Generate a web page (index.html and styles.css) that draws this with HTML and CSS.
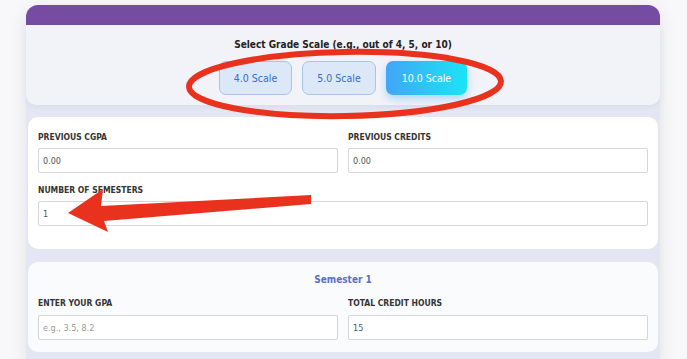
FILE: index.html
```html
<!DOCTYPE html>
<html lang="en">

<head>
    <meta charset="UTF-8">
    <meta name="viewport" content="width=device-width, initial-scale=1.0">
    <title>CGPA Calculator</title>
    <link rel="stylesheet" href="styles.css">
</head>

<body>
    <div class="container">
        <div class="top-bar"></div>
        <div class="scale-box">
            <p class="scale-title">Select Grade Scale (e.g., out of 4, 5, or 10)</p>
            <div class="scale-buttons">
                <button class="scale-btn">4.0 Scale</button>
                <button class="scale-btn">5.0 Scale</button>
                <button class="scale-btn active">10.0 Scale</button>
            </div>
        </div>

        <div class="card">
            <div class="row">
                <div class="field">
                    <label>Previous CGPA</label>
                    <input type="text" value="0.00">
                </div>
                <div class="field">
                    <label>Previous Credits</label>
                    <input type="text" value="0.00">
                </div>
            </div>
            <div class="field spaced">
                <label>Number of Semesters</label>
                <input type="text" value="1">
            </div>
        </div>

        <div class="card semester">
            <h3 class="semester-title">Semester 1</h3>
            <div class="row">
                <div class="field">
                    <label>Enter your GPA</label>
                    <input type="text" placeholder="e.g., 3.5, 8.2">
                </div>
                <div class="field">
                    <label>Total Credit Hours</label>
                    <input type="text" value="15">
                </div>
            </div>
        </div>
    </div>

    <!-- red markup drawn on top of the screenshot -->
    <svg class="markup" width="687" height="359" viewBox="0 0 687 359">
        <ellipse cx="345" cy="84" rx="156" ry="32" fill="none" stroke="#e8321e" stroke-width="6"
            transform="rotate(-1 345 84)" />
        <polygon points="68,213 103,189 101,206 311,195 311,204 104,221 108,232" fill="#e8321e" />
    </svg>
</body>

</html>
```

FILE: styles.css
```css
body {
    font-family: "Liberation Sans Narrow", "DejaVu Sans Condensed", "Liberation Sans", sans-serif;
    background-color: #f8f8fb;
    color: #333;
    margin: 0;
    padding: 0;
}

.container {
    width: 634px;
    margin: 5px 0 0 26px;
    padding-bottom: 12px;
    background: #e4e7f3;
    border-radius: 12px 12px 0 0;
    box-shadow: 0 4px 18px rgba(0, 0, 0, 0.09);
}

.top-bar {
    height: 20px;
    background: #764ba2;
    border-radius: 12px 12px 0 0;
}

.scale-box {
    background: #f2f3f9;
    padding: 14px 0 10px;
    border-radius: 0 0 10px 10px;
    text-align: center;
    box-shadow: 0 2px 6px rgba(80, 90, 160, 0.08);
}

.scale-title {
    margin: 0;
    font-size: 10px;
    font-weight: bold;
    line-height: 12px;
    color: #222;
}

.scale-buttons {
    display: flex;
    justify-content: center;
    gap: 10px;
    margin-top: 10px;
}

.scale-btn {
    height: 34px;
    padding: 0 14px;
    font-family: inherit;
    font-size: 10.5px;
    color: #3a6cbf;
    background: #dce8f7;
    border: 1px solid #a8c5e7;
    border-radius: 7px;
    cursor: pointer;
}

.scale-btn.active {
    color: white;
    padding: 0 16px;
    border: none;
    background: linear-gradient(90deg, #41a6f6, #1ae4f6);
    box-shadow: 0 4px 8px rgba(40, 160, 240, 0.35);
}

.card {
    margin: 12px 2px 0;
    background: white;
    border-radius: 10px;
    padding: 14px 10px 23px;
}

.card.semester {
    margin-top: 13px;
    padding: 12px 10px 12px;
    background: #fafbfd;
}

.row {
    display: flex;
    gap: 10px;
}

.field {
    flex: 1;
    display: flex;
    flex-direction: column;
}

.field.spaced {
    margin-top: 11px;
}

.semester .row {
    margin-top: 11px;
}

.field label {
    font-size: 8.5px;
    font-weight: bold;
    line-height: 12px;
    text-transform: uppercase;
    color: #333;
}

.field input {
    margin-top: 5px;
    height: 25px;
    box-sizing: border-box;
    padding: 0 4px;
    font-family: inherit;
    font-size: 9px;
    color: #555;
    border: 1px solid #d4d6dc;
    border-radius: 2px;
    background: white;
}

.semester .field input {
    margin-top: 6px;
}

.field input::placeholder {
    color: #9a9a9a;
}

.semester-title {
    margin: 0;
    text-align: center;
    font-size: 10px;
    line-height: 12px;
    color: #5a6fc6;
}

.markup {
    position: absolute;
    left: 0;
    top: 0;
    pointer-events: none;
}
```
